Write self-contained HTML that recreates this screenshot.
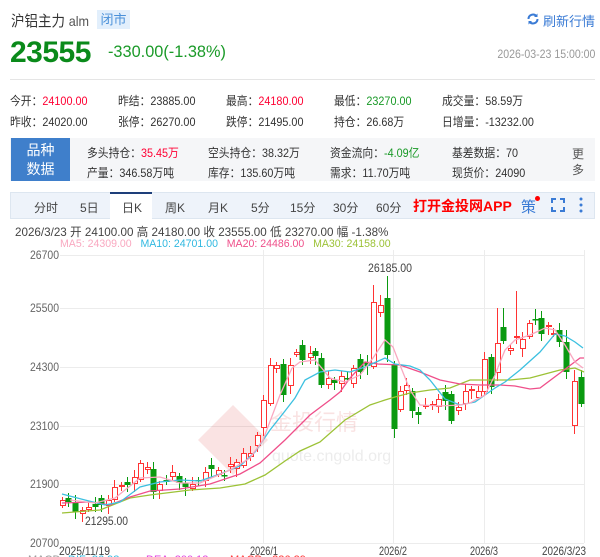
<!DOCTYPE html>
<html><head><meta charset="utf-8"><style>
*{margin:0;padding:0;box-sizing:border-box}
body{width:600px;height:557px;overflow:hidden;background:#fff;font-family:"Liberation Sans","Noto Sans CJK SC",sans-serif;color:#333;position:relative}
.a{position:absolute;white-space:nowrap}
.r{color:#f03}.g{color:#1a9a28}
.s{font-size:12px;transform:scaleX(.9);transform-origin:left center}
.t{font-size:12px;color:#444}
</style></head><body>
<div class="a" style="left:11px;top:10px;font-size:15px;color:#333;transform:scaleX(.9);transform-origin:left">沪铝主力 <span style="font-size:14px;color:#555">alm</span></div>
<div class="a" style="left:97px;top:10px;width:33px;height:19px;background:#e2effc;color:#4a90d9;font-size:13px;text-align:center;line-height:19px">闭市</div>
<svg class="a" style="left:526px;top:12px" width="14" height="14" viewBox="0 0 14 14"><path d="M2.5 7a4.5 4.5 0 0 1 8-2.8M11.5 7a4.5 4.5 0 0 1-8 2.8" stroke="#3a7bd5" stroke-width="2" fill="none"/><path d="M11.5 1.5v3.5h-3.5z M2.5 12.5v-3.5h3.5z" fill="#3a7bd5"/></svg>
<div class="a" style="right:5px;top:11px;font-size:13px;color:#3a7bd5">刷新行情</div>
<div class="a" style="left:10px;top:36px;font-size:30px;font-weight:bold;color:#0a8a1a;letter-spacing:-0.5px">23555</div>
<div class="a g" style="left:108px;top:42px;font-size:17px;transform:scaleX(.96);transform-origin:left">-330.00(-1.38%)</div>
<div class="a" style="right:5px;top:47px;font-size:12px;color:#999;transform:scaleX(.88);transform-origin:right">2026-03-23 15:00:00</div>
<div class="a" style="left:10px;top:79px;width:585px;height:1px;background:#e5e5e5"></div>
<div class="a s" style="left:10px;top:92px">今开：<span class="r">24100.00</span></div>
<div class="a s" style="left:118px;top:92px">昨结：23885.00</div>
<div class="a s" style="left:226px;top:92px">最高：<span class="r">24180.00</span></div>
<div class="a s" style="left:334px;top:92px">最低：<span class="g">23270.00</span></div>
<div class="a s" style="left:442px;top:92px">成交量：58.59万</div>
<div class="a s" style="left:10px;top:113px">昨收：24020.00</div>
<div class="a s" style="left:118px;top:113px">张停：26270.00</div>
<div class="a s" style="left:226px;top:113px">跌停：21495.00</div>
<div class="a s" style="left:334px;top:113px">持仓：26.68万</div>
<div class="a s" style="left:442px;top:113px">日增量：-13232.00</div>
<div class="a" style="left:10px;top:138px;width:585px;height:43px;background:#f5f6f8"></div>
<div class="a" style="left:11px;top:138px;width:59px;height:43px;background:#3f7fcb;color:#fff;font-size:14px;text-align:center;line-height:19px;padding-top:3px;white-space:normal">品种<br>数据</div>
<div class="a s" style="left:87px;top:144px">多头持仓：<span class="r">35.45万</span></div>
<div class="a s" style="left:208px;top:144px">空头持仓：38.32万</div>
<div class="a s" style="left:330px;top:144px">资金流向：<span class="g">-4.09亿</span></div>
<div class="a s" style="left:452px;top:144px">基差数据：70</div>
<div class="a s" style="left:87px;top:164px">产量：346.58万吨</div>
<div class="a s" style="left:208px;top:164px">库存：135.60万吨</div>
<div class="a s" style="left:330px;top:164px">需求：11.70万吨</div>
<div class="a s" style="left:452px;top:164px">现货价：24090</div>
<div class="a" style="left:572px;top:146px;font-size:12px;line-height:16px;white-space:normal;width:13px;color:#555">更多</div>
<div class="a" style="left:10px;top:192px;width:585px;height:27px;background:#eef3fa;border:1px solid #dde6f0"></div>
<div class="a" style="left:110px;top:192px;width:42px;height:28px;background:#fff;border-top:2px solid #1e3f7a"></div>
<div class="a t" style="left:34px;top:199px">分时</div>
<div class="a t" style="left:80px;top:199px">5日</div>
<div class="a t" style="left:122px;top:199px">日K</div>
<div class="a t" style="left:165px;top:199px">周K</div>
<div class="a t" style="left:208px;top:199px">月K</div>
<div class="a t" style="left:251px;top:199px">5分</div>
<div class="a t" style="left:290px;top:199px">15分</div>
<div class="a t" style="left:333px;top:199px">30分</div>
<div class="a t" style="left:376px;top:199px">60分</div>
<div class="a" style="left:413px;top:196px;font-size:14px;font-weight:bold;color:#f00">打开金投网APP</div>
<div class="a" style="left:521px;top:196px;font-size:15px;color:#3a7bd5">策</div>
<div class="a" style="left:535px;top:196px;width:5px;height:5px;border-radius:50%;background:#f00"></div>
<svg class="a" style="left:551px;top:198px" width="14" height="14"><path d="M1 5V1h4M9 1h4v4M13 9v4H9M5 13H1V9" stroke="#3a7bd5" stroke-width="2" fill="none"/></svg>
<svg class="a" style="left:579px;top:197px" width="4" height="16"><circle cx="2" cy="2" r="1.5" fill="#3a7bd5"/><circle cx="2" cy="8" r="1.5" fill="#3a7bd5"/><circle cx="2" cy="14" r="1.5" fill="#3a7bd5"/></svg>
<div class="a" style="left:15px;top:223px;font-size:12px;color:#444;transform:scaleX(.97);transform-origin:left">2026/3/23 开 24100.00 高 24180.00 收 23555.00 低 23270.00 幅 -1.38%</div>
<div class="a" style="left:60px;top:238px;font-size:11px;transform:scaleX(.96);transform-origin:left"><span style="color:#f9a8c0">MA5: 24309.00</span>&nbsp;&nbsp;&nbsp;<span style="color:#2fb8e0">MA10: 24701.00</span>&nbsp;&nbsp;&nbsp;<span style="color:#ef4f8a">MA20: 24486.00</span>&nbsp;&nbsp;&nbsp;<span style="color:#9cc236">MA30: 24158.00</span></div>
<svg class="a" style="left:0;top:0" width="600" height="557" id="c">
<g stroke="#ececec" stroke-width="1">
<line x1="60" y1="255.5" x2="584" y2="255.5"/><line x1="60" y1="308.5" x2="584" y2="308.5"/><line x1="60" y1="367.5" x2="584" y2="367.5"/><line x1="60" y1="426.5" x2="584" y2="426.5"/><line x1="60" y1="484.5" x2="584" y2="484.5"/><line x1="60" y1="543.5" x2="584" y2="543.5"/>
<line x1="263.5" y1="250" x2="263.5" y2="543"/><line x1="393.5" y1="250" x2="393.5" y2="543"/><line x1="484.5" y1="250" x2="484.5" y2="543"/><line x1="584.5" y1="250" x2="584.5" y2="543"/>
</g>
<g fill="#666" font-size="12" font-family="Liberation Sans,sans-serif">
<text x="30" y="259" textLength="29" lengthAdjust="spacingAndGlyphs">26700</text><text x="30" y="312" textLength="29" lengthAdjust="spacingAndGlyphs">25500</text><text x="30" y="371" textLength="29" lengthAdjust="spacingAndGlyphs">24300</text><text x="30" y="430" textLength="29" lengthAdjust="spacingAndGlyphs">23100</text><text x="30" y="488" textLength="29" lengthAdjust="spacingAndGlyphs">21900</text><text x="30" y="547" textLength="29" lengthAdjust="spacingAndGlyphs">20700</text>
<text x="59" y="555" fill="#444" textLength="51" lengthAdjust="spacingAndGlyphs">2025/11/19</text><text x="250" y="555" fill="#444" textLength="28" lengthAdjust="spacingAndGlyphs">2026/1</text><text x="379" y="555" fill="#444" textLength="28" lengthAdjust="spacingAndGlyphs">2026/2</text><text x="470" y="555" fill="#444" textLength="28" lengthAdjust="spacingAndGlyphs">2026/3</text><text x="542" y="555" fill="#444" textLength="44" lengthAdjust="spacingAndGlyphs">2026/3/23</text>
<text x="368" y="272" fill="#444" textLength="44" lengthAdjust="spacingAndGlyphs">26185.00</text><text x="85" y="525" fill="#444" textLength="43" lengthAdjust="spacingAndGlyphs">21295.00</text>
</g>
<g font-size="11" font-family="Liberation Sans,sans-serif"><text x="28" y="563" fill="#999">MACD</text><text x="68" y="563" fill="#2fb8e0">DIF: 86.98</text><text x="146" y="563" fill="#e040e0">DEA: 200.12</text><text x="230" y="563" fill="#f33">MACD: -226.29</text></g>
<g opacity="0.15" fill="#d44">
<path d="M233 405 L268 440 L233 475 L198 440Z"/>
<text x="270" y="430" font-size="22" font-family="Noto Sans CJK SC,sans-serif">金投行情</text>
<text x="272" y="461" font-size="16" fill="#888" font-family="Liberation Sans,sans-serif">quote.cngold.org</text>
</g>
<g id="k"></g>
</svg>
<script>
var d=[[62,500,505,'r'],[68,498,502,'g'],[75,502,512,'g'],[82,510,513,'r'],[88,507,509,'r'],[95,504,507,'g'],[101,498,505,'g'],[108,500,505,'r'],[114,487,499,'r'],[121,485,486,'r'],[127,482,485,'g'],[134,477,483,'r'],[140,463,479,'r'],[147,467,469,'r'],[153,469,492,'g'],[159,484,490,'r'],[166,480,482,'g'],[172,472,476,'r'],[179,476,483,'g'],[185,483,487,'g'],[192,484,488,'r'],[198,480,481,'g'],[205,472,480,'r'],[211,465,469,'g'],[218,470,474,'r'],[224,475,476,'g'],[230,464,466,'r'],[236,462,468,'r'],[243,453,465,'r'],[250,453,456,'r'],[257,435,445,'r'],[263,400,427,'r'],[270,365,403,'r'],[276,365,368,'r'],[283,364,395,'g'],[290,365,385,'r'],[296,352,354,'r'],[302,345,360,'g'],[310,353,357,'r'],[315,351,356,'g'],[321,358,385,'g'],[328,378,384,'r'],[334,380,383,'g'],[341,376,383,'r'],[347,378,379,'g'],[353,368,383,'r'],[360,359,372,'g'],[367,362,366,'g'],[373,302,366,'r'],[380,305,312,'r'],[387,298,355,'g'],[394,364,429,'g'],[400,391,409,'r'],[406,385,390,'r'],[412,391,411,'g'],[418,412,415,'g'],[425,405,406,'r'],[432,404,405,'r'],[438,399,406,'r'],[445,392,401,'g'],[451,394,421,'g'],[458,407,410,'r'],[465,391,403,'r'],[471,389,390,'r'],[478,391,397,'r'],[484,359,391,'r'],[491,357,387,'g'],[497,343,372,'r'],[503,327,341,'g'],[510,348,350,'r'],[516,336,337,'r'],[522,339,348,'r'],[529,323,336,'r'],[535,319,320,'g'],[541,318,334,'g'],[548,325,326,'r'],[553,333,334,'r'],[559,330,342,'g'],[566,342,372,'g'],[574,381,425,'r'],[581,377,404,'g']];
var hi={373:285,387:276,497:308,516:291,535:309,380:295,503:308,566:330,574:370};
var s='';
d.forEach(function(c,i){var x=c[0],t=c[1],b=c[2],col=c[3]=='r'?'#f33':'#0a9a10';
var h=hi[x]||t-3-(i%3)*2,l=b+3+(i%4)*2;
s+='<line x1="'+(x+.5)+'" y1="'+h+'" x2="'+(x+.5)+'" y2="'+l+'" stroke="'+col+'"/>';
if(c[3]=='r')s+='<rect x="'+(x-2)+'.5" y="'+t+'.5" width="5" height="'+Math.max(1,b-t)+'" fill="#fff" stroke="#f33"/>';
else s+='<rect x="'+(x-2.5)+'" y="'+t+'" width="6" height="'+Math.max(1.5,b-t)+'" fill="#0a9a10"/>';});
function pl(p,c){return '<polyline fill="none" stroke="'+c+'" stroke-width="1.3" points="'+p+'"/>';}
s+=pl("62,513 100,510 130,498 150,495 190,490 220,488 245,484 265,475 285,461 300,451 320,442 345,420 370,405 385,400 395,397 410,393 430,390 450,388 470,380 490,380 510,380 530,378 545,374 560,370 575,368 584,372","#9cc236");
s+=pl("62,503 90,502 110,505 130,497 150,491 180,489 210,484 240,474 260,463 285,440 310,415 330,400 340,392 350,378 365,362 378,364 400,365 420,372 440,380 460,384 480,385 500,385 515,386 530,389 540,388 560,373 580,358 584,358","#ef4f8a");
s+=pl("62,494 85,500 105,505 120,502 140,487 160,482 180,480 200,481 220,474 240,466 255,452 270,430 285,411 295,398 305,380 320,372 335,370 350,372 365,367 385,358 395,364 410,366 420,370 430,380 445,399 460,405 475,402 485,395 495,388 505,382 520,370 540,352 555,334 565,336 575,342 583,348","#3cc0e0");
s+=pl("70,500 95,503 115,498 140,478 160,477 180,483 200,483 230,470 250,458 263,440 280,395 292,368 300,362 315,360 330,378 345,382 360,375 373,358 385,340 393,347 400,365 410,390 420,405 440,406 460,405 470,403 485,395 495,375 505,350 515,340 530,335 545,328 555,330 565,345 575,362 583,368","#f9a8c0");
document.getElementById('k').innerHTML=s;
</script>
</body></html>
